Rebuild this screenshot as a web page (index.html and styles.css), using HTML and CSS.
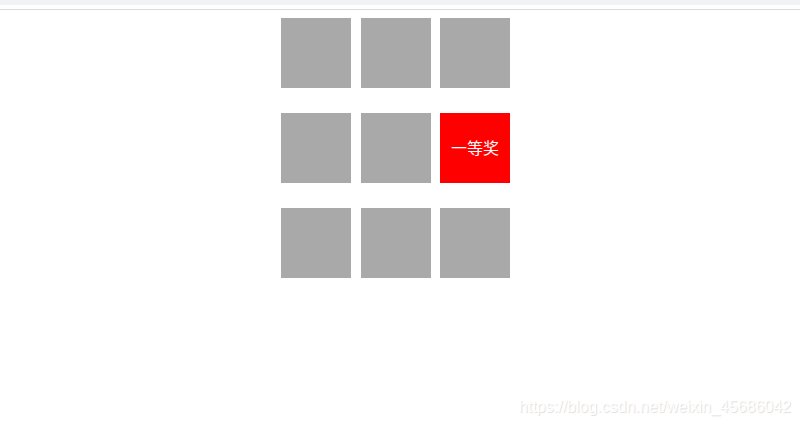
FILE: index.html
```html
<!DOCTYPE html>
<html lang="zh-CN">
<head>
    <meta charset="UTF-8">
    <meta name="viewport" content="width=device-width, initial-scale=1.0">
    <title>九宫格抽奖</title>
    <link rel="stylesheet" href="styles.css">
</head>
<body>
<header class="top-bar"></header>

<main class="box">
    <div class="item"></div>
    <div class="item"></div>
    <div class="item"></div>
    <div class="item"></div>
    <div class="item"></div>
    <div class="item active">一等奖</div>
    <div class="item"></div>
    <div class="item"></div>
    <div class="item"></div>
</main>

<footer class="source">https://blog.csdn.net/weixin_45686042</footer>
</body>
</html>
```

FILE: styles.css
```css
* {
    box-sizing: border-box;
}
body {
    display: flex;
    flex-direction: column;
    min-height: 100vh;
    margin: 0;
    background-color: #fff;
    font-family: "Liberation Sans", "Noto Sans CJK SC", sans-serif;
    font-size: 16px;
}
.top-bar {
    height: 10px;
    border-top: 5px solid #f1f2f4;
    border-bottom: 1px solid #dadada;
}
.box {
    display: grid;
    grid-template-columns: repeat(3, 70px);
    justify-content: space-between;
    row-gap: 25px;
    width: 238px;
    margin: 8px auto;
    padding-right: 9px;
}
.item {
    height: 70px;
    line-height: 72px;
    text-align: center;
    color: #fff;
    background-color: #a9a9a9;
}
.active {
    background-color: #f00;
}
.source {
    margin-top: auto;
    padding: 8px 9px;
    line-height: 20px;
    text-align: right;
    color: #fff;
    text-shadow: 1px 1px 1px #ddd;
}
```
